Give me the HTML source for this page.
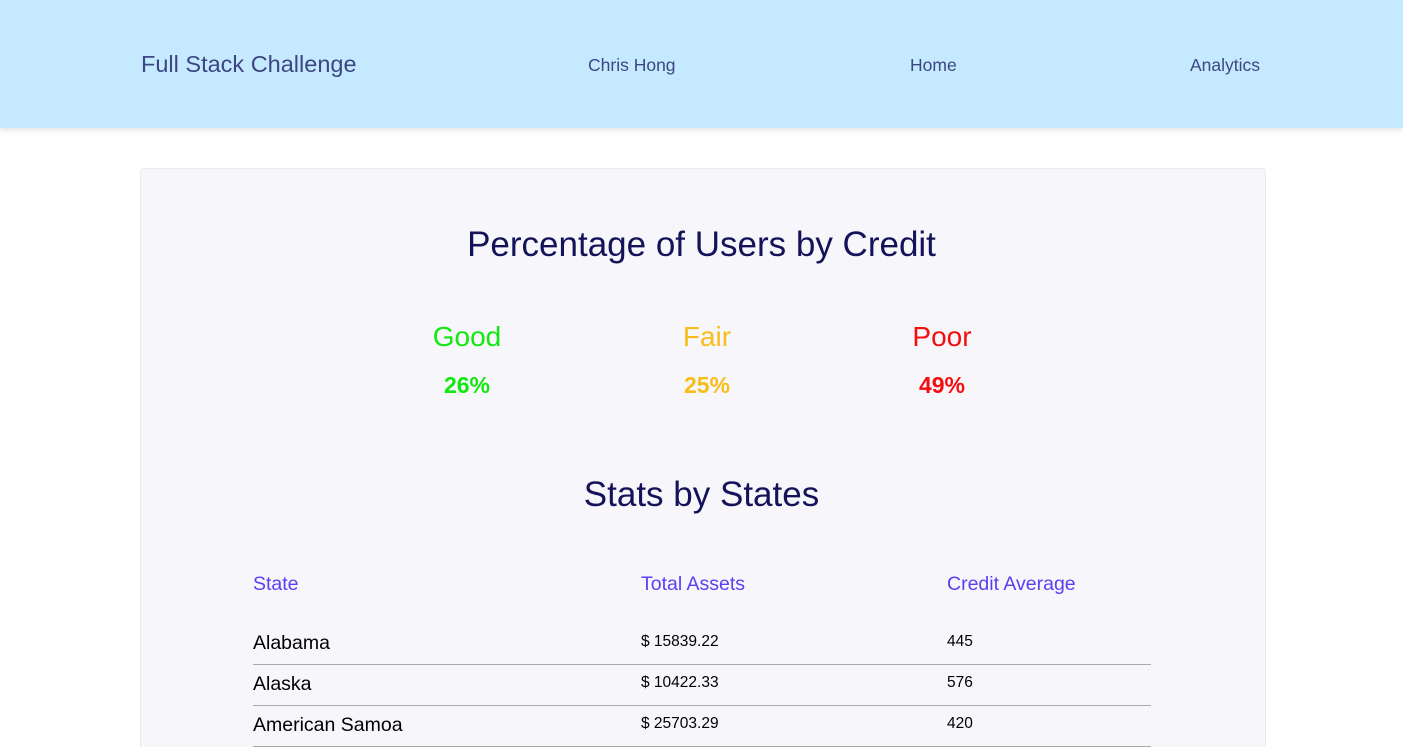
<!DOCTYPE html>
<html><head><meta charset="utf-8"><style>
html,body{margin:0;padding:0;width:1403px;height:747px;overflow:hidden;background:#fff;font-family:"Liberation Sans",sans-serif;position:relative;}
.nav{position:absolute;left:0;top:0;width:1403px;height:128px;background:#c5eaff;box-shadow:0 2px 6px rgba(0,0,0,0.12);z-index:2;}
.nav span{position:absolute;top:55px;color:#3d4683;font-size:17.5px;}
.brand{left:141px;top:51px!important;font-size:23.5px!important;}
.card{position:absolute;left:140px;top:168px;width:1124px;height:578px;background:#f7f6fb;border:1px solid #ebeaf0;border-bottom:none;border-radius:4px 4px 0 0;}
.abs{position:absolute;white-space:nowrap;}
.t{color:#14135a;font-size:35px;width:1403px;left:0;text-align:center;}
.c{font-size:28px;text-align:center;width:200px;}
.p{font-size:23px;font-weight:bold;text-align:center;width:200px;}
.th{color:#5a3ff0;font-size:19.5px;top:573px;}
.td{color:#000;font-size:19.5px;}
.num{font-size:15.5px;}
.line{position:absolute;left:253px;width:898px;height:1px;background:#aaa;}
</style></head><body>
<div class="nav"><span class="brand">Full Stack Challenge</span><span style="left:588px">Chris Hong</span><span style="left:910px">Home</span><span style="left:1190px">Analytics</span></div>
<div class="card"></div>
<div class="abs t" style="top:225px">Percentage of Users by Credit</div>
<div class="abs c" style="left:367px;top:321px;color:#11e80e">Good</div>
<div class="abs c" style="left:607px;top:321px;color:#f9bd1a">Fair</div>
<div class="abs c" style="left:842px;top:321px;color:#f50e0e">Poor</div>
<div class="abs p" style="left:367px;top:372px;color:#11e80e">26%</div>
<div class="abs p" style="left:607px;top:372px;color:#f9bd1a">25%</div>
<div class="abs p" style="left:842px;top:372px;color:#f50e0e">49%</div>
<div class="abs t" style="top:475px">Stats by States</div>
<div class="abs th" style="left:253px">State</div>
<div class="abs th" style="left:641px">Total Assets</div>
<div class="abs th" style="left:947px">Credit Average</div>
<div class="abs td" style="left:253px;top:632px">Alabama</div>
<div class="abs td num" style="left:641px;top:633px">$ 15839.22</div>
<div class="abs td num" style="left:947px;top:633px">445</div>
<div class="line" style="top:664px"></div>
<div class="abs td" style="left:253px;top:673px">Alaska</div>
<div class="abs td num" style="left:641px;top:674px">$ 10422.33</div>
<div class="abs td num" style="left:947px;top:674px">576</div>
<div class="line" style="top:705px"></div>
<div class="abs td" style="left:253px;top:714px">American Samoa</div>
<div class="abs td num" style="left:641px;top:715px">$ 25703.29</div>
<div class="abs td num" style="left:947px;top:715px">420</div>
<div class="line" style="top:746px"></div>
</body></html>
